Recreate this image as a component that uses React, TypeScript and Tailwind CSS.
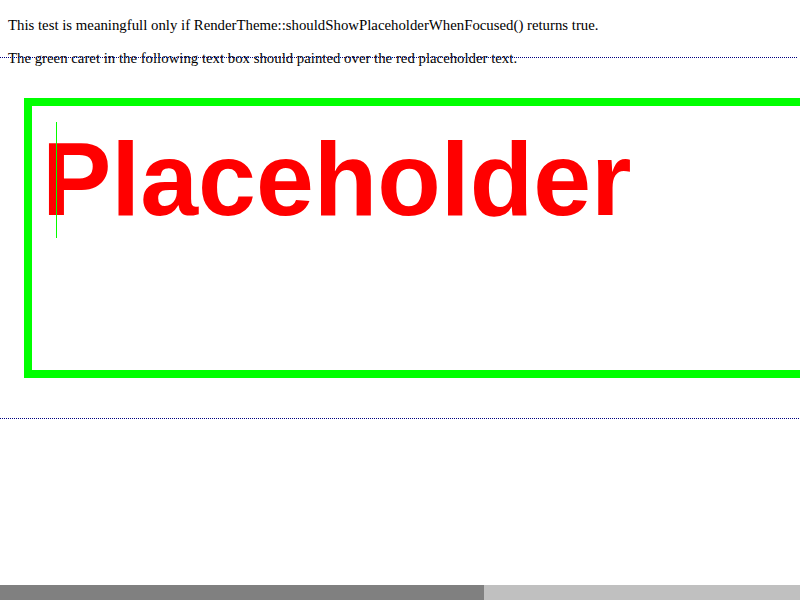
import React from 'react';

const dotted = 'h-px bg-[linear-gradient(to_right,#000080_50%,transparent_50%)] bg-[length:2px_1px]';

export default function App() {
  return (
    <div className="w-[800px] h-[600px] flex flex-col overflow-hidden bg-white text-black">
      <div className="relative flex-1 overflow-hidden font-['Liberation_Serif',serif] text-[14.8px]">
        <p className="mt-4 ml-2 leading-[18px] whitespace-nowrap">
          This test is meaningfull only if RenderTheme::shouldShowPlaceholderWhenFocused() returns true.
        </p>
        <div className="relative mt-[15px]">
          {/* dotted guide line drawn over the text */}
          <div className={`absolute left-0 right-[2px] top-[8px] ${dotted}`} />
          <p className="ml-2 leading-[18px] whitespace-nowrap">
            The green caret in the following text box should painted over the red placeholder text.
          </p>
        </div>

        {/* text box */}
        <div className="relative ml-6 mt-[31px] w-[1300px] h-[280px] box-border border-8 border-[#00ff00]">
          <span className="absolute left-[10px] top-[21px] leading-none whitespace-nowrap font-['Liberation_Sans',Arial,sans-serif] font-bold text-[104px] text-[#ff0000]">
            Placeholder
          </span>
          <div className="absolute left-[24px] top-[16px] w-px h-[116px] bg-[#00ff00]" />
        </div>

        <div className={`mt-[40px] ${dotted}`} />
      </div>

      {/* horizontal scrollbar */}
      <div className="h-[15px] flex bg-[#c0c0c0]">
        <div className="w-[484px] bg-[#808080]" />
      </div>
    </div>
  );
}
